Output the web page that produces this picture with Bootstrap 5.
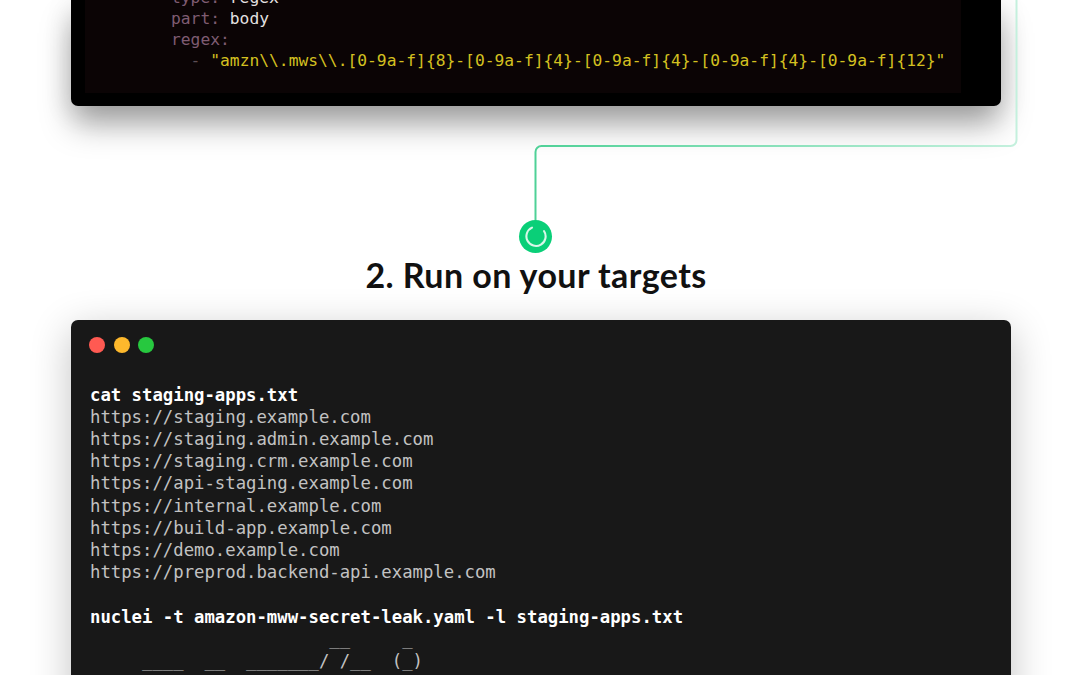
<!DOCTYPE html>
<html lang="en">
<head>
<meta charset="utf-8">
<title>Run on your targets</title>
<link rel="stylesheet" href="https://cdn.jsdelivr.net/npm/bootstrap@5.3.0/dist/css/bootstrap.min.css">
<style>
html,body{background:#fff;height:675px;overflow:hidden}
.stage{position:relative;height:675px;overflow:hidden;padding-left:71px}
.wire{position:absolute;left:0;top:0;width:1080px;height:260px;pointer-events:none;z-index:1}
.win-top{width:930px;height:106px;background:#000;border-radius:0 0 7px 7px;padding:0 40px 13px 14px;box-shadow:0 20px 32px -2px rgba(0,0,0,.34),0 6px 28px rgba(0,0,0,.12)}
.code-top{background:#0b0405;height:100%;padding:0 0 22px 86px;font:16.3px/21px "DejaVu Sans Mono",monospace;white-space:pre;color:#e4e0e0}
.k{color:#7f5c72}.p{color:#5d4f55}.y{color:#d4c020}
.col-main{width:930px}
.step-stack{margin-right:2px}
.dot-step{width:33px;height:33px;background:#0acf78;margin-top:114px;position:relative;z-index:2}
.step-title{font:700 34px/1.2 Lato,sans-serif;color:#111;letter-spacing:.42px;margin:2px 0 24px 2px}
.win-term{width:940px;height:420px;background:#181818;border-radius:7px;padding:17px 18px;box-shadow:0 10px 40px rgba(0,0,0,.24)}
.lights{gap:8.6px}
.tl{width:16px;height:16px}
.tl-r{background:#ff5a52}.tl-y{background:#fdb82c}.tl-g{background:#27c83f}
.term{font:17.3px/22.17px "DejaVu Sans Mono",monospace;color:#c2c2c2;white-space:pre;margin:31px 0 0 1px}
.term b{color:#fff;font-weight:700}
</style>
</head>
<body>
<main class="stage">
<svg class="wire" viewBox="0 0 1080 260" fill="none" aria-hidden="true">
<defs><linearGradient id="g" gradientUnits="userSpaceOnUse" x1="535" y1="0" x2="1016" y2="0"><stop offset="0" stop-color="#4fd197"/><stop offset="1" stop-color="#c4f0dd"/></linearGradient></defs>
<path d="M535.5 224V152a6 6 0 0 1 6-6H1010.5a6 6 0 0 0 6-6V0" stroke="url(#g)" stroke-width="2"/>
</svg>
<div class="col-main">
<section class="win-top"><div class="code-top d-flex flex-column justify-content-end"><div><span class="k">type:</span> regex</div><div><span class="k">part:</span> body</div><div><span class="k">regex:</span></div><div>  <span class="p">-</span> <span class="y">"amzn\\.mws\\.[0-9a-f]{8}-[0-9a-f]{4}-[0-9a-f]{4}-[0-9a-f]{4}-[0-9a-f]{12}"</span></div></div></section>
<div class="step-stack d-flex flex-column align-items-center">
<div class="dot-step rounded-circle d-flex align-items-center justify-content-center">
<svg width="23" height="23" viewBox="0 0 23 23" fill="none"><path d="M8 2.6A9.6 9.6 0 1 0 20 6" stroke="#d9f7e9" stroke-width="2.1" stroke-linecap="round"/></svg>
</div>
<h2 class="step-title">2. Run on your targets</h2>
</div>
</div>
<section class="win-term">
<div class="lights d-flex"><span class="tl tl-r rounded-circle"></span><span class="tl tl-y rounded-circle"></span><span class="tl tl-g rounded-circle"></span></div>
<pre class="term"><b>cat staging-apps.txt</b>
https://staging.example.com
https://staging.admin.example.com
https://staging.crm.example.com
https://api-staging.example.com
https://internal.example.com
https://build-app.example.com
https://demo.example.com
https://preprod.backend-api.example.com

<b>nuclei -t amazon-mww-secret-leak.yaml -l staging-apps.txt</b>
                       __     _
     ____  __  _______/ /__  (_)</pre>
</section>
</main>
<script src="https://cdn.jsdelivr.net/npm/bootstrap@5.3.0/dist/js/bootstrap.bundle.min.js"></script>
</body>
</html>
